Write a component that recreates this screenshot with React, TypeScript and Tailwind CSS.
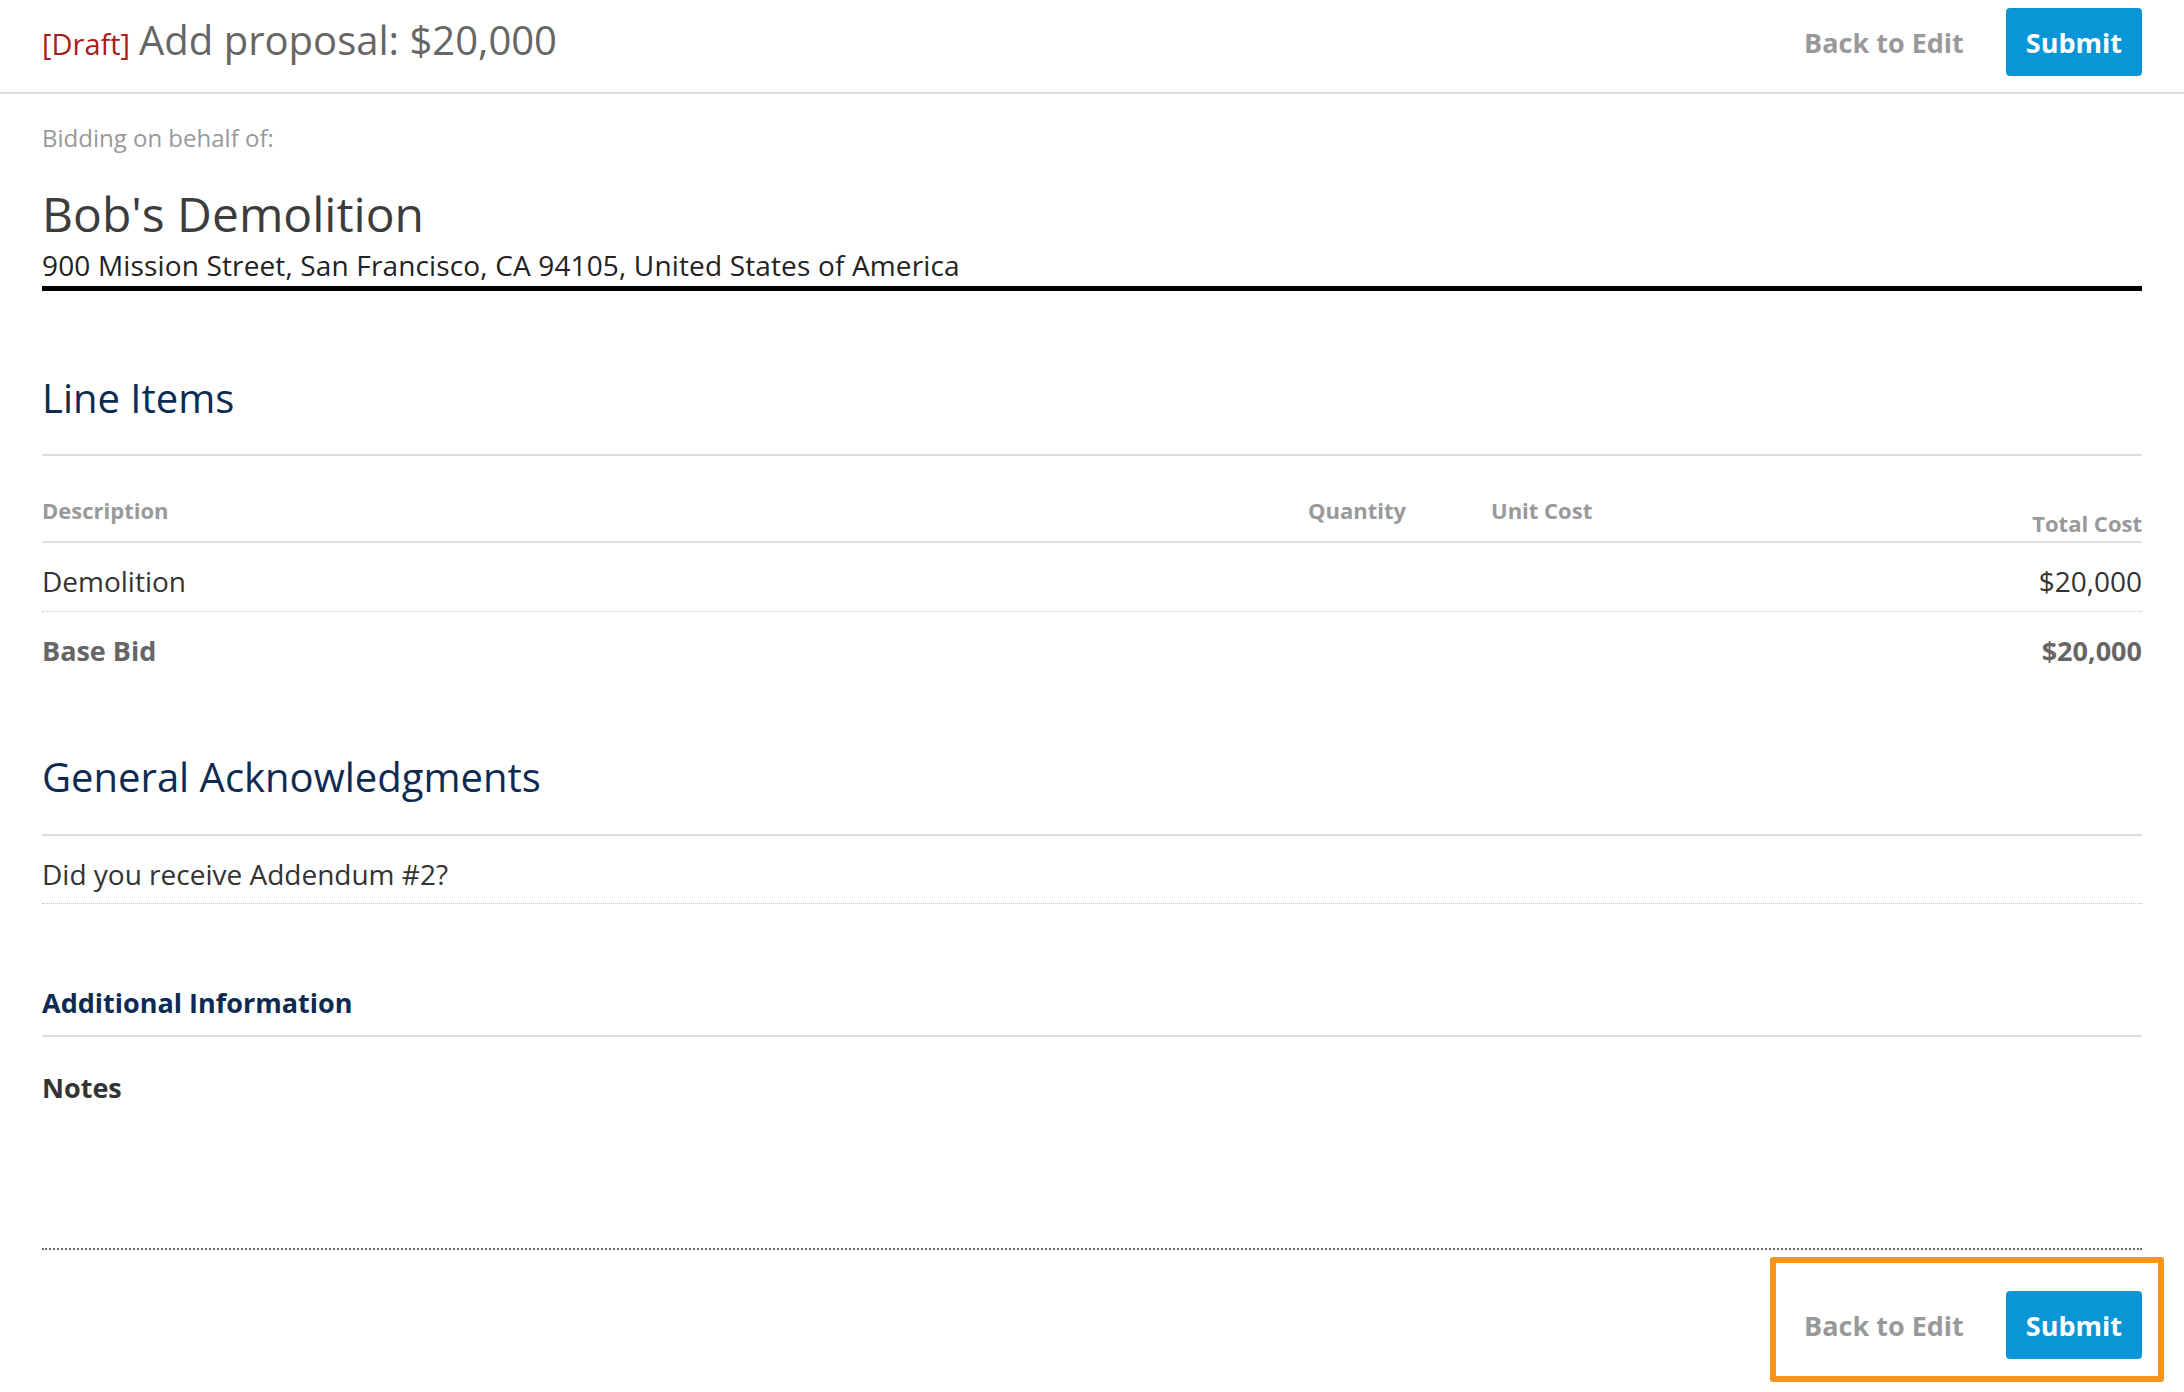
import React from "react"

function ActionButtons() {
  return (
    <div className="flex items-center gap-[42px]">
      <button className="text-[27px] font-bold text-[#999] leading-none">Back to Edit</button>
      <button className="h-[68px] px-[20px] rounded-[4px] bg-[#0a96d6] text-[27px] font-bold text-white leading-none">
        Submit
      </button>
    </div>
  )
}

export default function App() {
  return (
    <div className="min-h-screen bg-white font-['Open_Sans',sans-serif] text-[#333]">
      {/* header */}
      <header className="h-[94px] border-b-2 border-[#ddd] pb-[8px] px-[42px] flex items-center justify-between">
        <h1 className="flex items-baseline leading-[48px]">
          <span className="text-[29px] text-[#a81c1c]">[Draft]</span>
          <span className="ml-[9px] text-[40px] text-[#666]">Add proposal: $20,000</span>
        </h1>
        <ActionButtons />
      </header>

      <main className="px-[42px]">
        <div className="pt-[28px]">
          <div className="text-[24px] leading-[32px] text-[#999]">Bidding on behalf of:</div>
          <div className="mt-[32px] text-[48px] leading-[56px] text-[#3c3c3c]">Bob's Demolition</div>
          <div className="mt-[5px] text-[28px] leading-[36px] tracking-[0.15px] text-[#222]">
            900 Mission Street, San Francisco, CA 94105, United States of America
          </div>
          <div className="mt-[3px] h-[5px] bg-black" />
        </div>

        {/* line items */}
        <section className="mt-[83px]">
          <h2 className="text-[40px] leading-[48px] text-[#0d2b52]">Line Items</h2>
          <div className="mt-[32px] h-[2px] bg-[#ddd]" />
          <div className="grid grid-cols-[1fr_183px_183px_468px] pt-[39px] pb-[3px] border-b-2 border-[#ddd] text-[22px] leading-[30px] font-bold text-[#999]">
            <div>Description</div>
            <div>Quantity</div>
            <div>Unit Cost</div>
            <div className="pt-[13px] text-right">Total Cost</div>
          </div>
          <div className="grid grid-cols-[1fr_183px_183px_468px] pt-[20px] pb-[12px] border-b border-dotted border-[#c8c8c8] text-[28px] leading-[36px] text-[#333]">
            <div>Demolition</div>
            <div />
            <div />
            <div className="text-right">$20,000</div>
          </div>
          <div className="grid grid-cols-[1fr_183px_183px_468px] pt-[21px] text-[27px] leading-[36px] font-bold text-[#666]">
            <div>Base Bid</div>
            <div />
            <div />
            <div className="text-right">$20,000</div>
          </div>
        </section>

        {/* acknowledgments */}
        <section className="mt-[84px]">
          <h2 className="text-[40px] leading-[48px] text-[#0d2b52]">General Acknowledgments</h2>
          <div className="mt-[33px] h-[2px] bg-[#ddd]" />
          <div className="pt-[20px] pb-[11px] border-b border-dotted border-[#c8c8c8] text-[28px] leading-[36px] text-[#333]">
            Did you receive Addendum #2?
          </div>
        </section>

        {/* additional info */}
        <section className="mt-[81px]">
          <h3 className="text-[27px] leading-[36px] font-bold text-[#0d2b52]">Additional Information</h3>
          <div className="mt-[14px] h-[2px] bg-[#ddd]" />
          <div className="pt-[33px] text-[27px] leading-[36px] font-bold text-[#333]">Notes</div>
          <div className="mt-[142px] border-b-2 border-dotted border-[#666]" />
        </section>

        {/* footer */}
        <footer className="relative mt-[41px] flex justify-end pb-[31px]">
          <ActionButtons />
          <div className="absolute right-[-22px] top-[-34px] w-[394px] h-[125px] border-[6px] border-[#f7941d] rounded-[3px] pointer-events-none" />
        </footer>
      </main>
    </div>
  )
}
